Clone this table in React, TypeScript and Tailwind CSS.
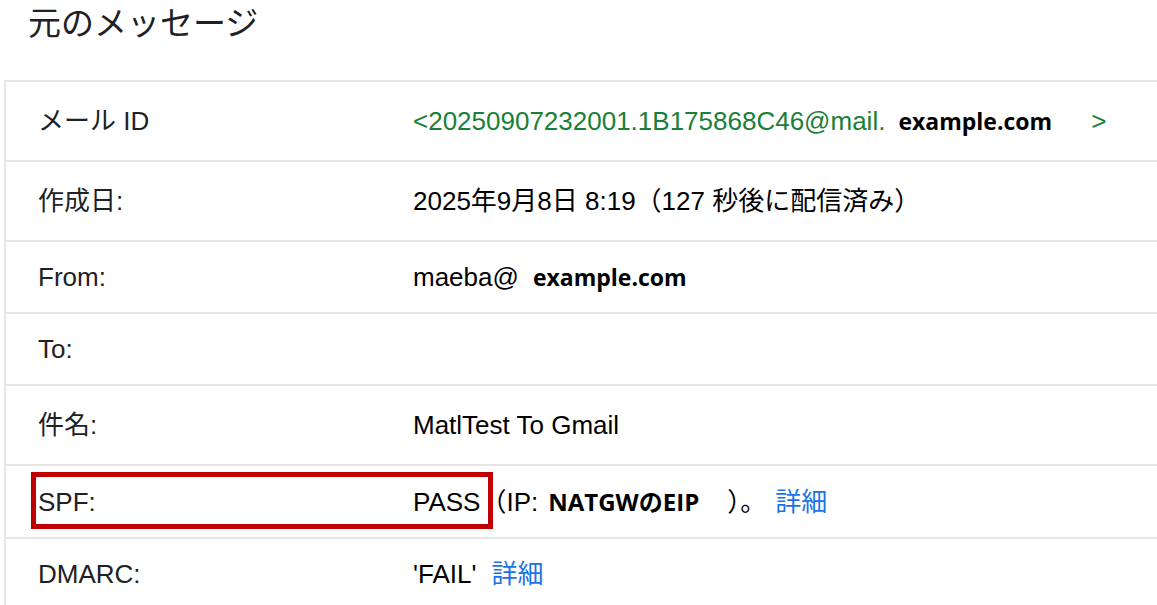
import React from "react";

const bold = "font-['Open_Sans','Noto_Sans_CJK_JP',sans-serif] font-bold text-black text-[23px]";

function Row({
  label,
  h,
  children,
  extra,
}: {
  label: string;
  h: string;
  children?: React.ReactNode;
  extra?: React.ReactNode;
}) {
  return (
    <div className={`relative flex items-center border-b-2 border-[#e6e6e6] ${h}`}>
      <div className="w-[407px] shrink-0 pl-[32px] text-[#202124]">{label}</div>
      <div className="flex items-center whitespace-nowrap text-black">{children}</div>
      {extra}
    </div>
  );
}

export default function App() {
  return (
    <div className="w-[1157px] h-[605px] overflow-hidden bg-white font-['Liberation_Sans','Noto_Sans_CJK_JP',sans-serif] text-[26px] leading-[30px]">
      <h1 className="h-[80px] pl-[28px] pt-[5px] text-[33px] leading-[38px] font-normal text-[#202124]">
        元のメッセージ
      </h1>
      <div className="ml-[4px] border-l-2 border-t-2 border-[#e6e6e6]">
        <Row label="メール ID" h="h-[80px]">
          <span className="text-[#188038]">&lt;20250907232001.1B175868C46@mail.</span>
          <span className={`${bold} ml-[13px]`}>example.com</span>
          <span className="ml-[39px] text-[#188038]">&gt;</span>
        </Row>
        <Row label="作成日:" h="h-[80px]">
          <span>2025年9月8日 8:19（127 秒後に配信済み）</span>
        </Row>
        <Row label="From:" h="h-[72px]">
          <span>maeba@</span>
          <span className={`${bold} ml-[14px]`}>example.com</span>
        </Row>
        <Row label="To:" h="h-[72px]" />
        <Row label="件名:" h="h-[80px]">
          <span>MatlTest To Gmail</span>
        </Row>
        <Row
          label="SPF:"
          h="h-[73px]"
          extra={
            <div className="pointer-events-none absolute left-[25px] top-[6px] h-[57px] w-[462px] border-[5px] border-[#c00000]" />
          }
        >
          <span>PASS</span>
          <span>（IP:</span>
          <span className={`${bold} ml-[10px] text-[24px]`}>NATGWのEIP</span>
          <span className="ml-[28px]">）。</span>
          <a className="ml-[9px] text-[#1a73e8]">詳細</a>
        </Row>
        <Row label="DMARC:" h="h-[72px]">
          <span>'FAIL'</span>
          <a className="ml-[15px] text-[#1a73e8]">詳細</a>
        </Row>
      </div>
    </div>
  );
}
